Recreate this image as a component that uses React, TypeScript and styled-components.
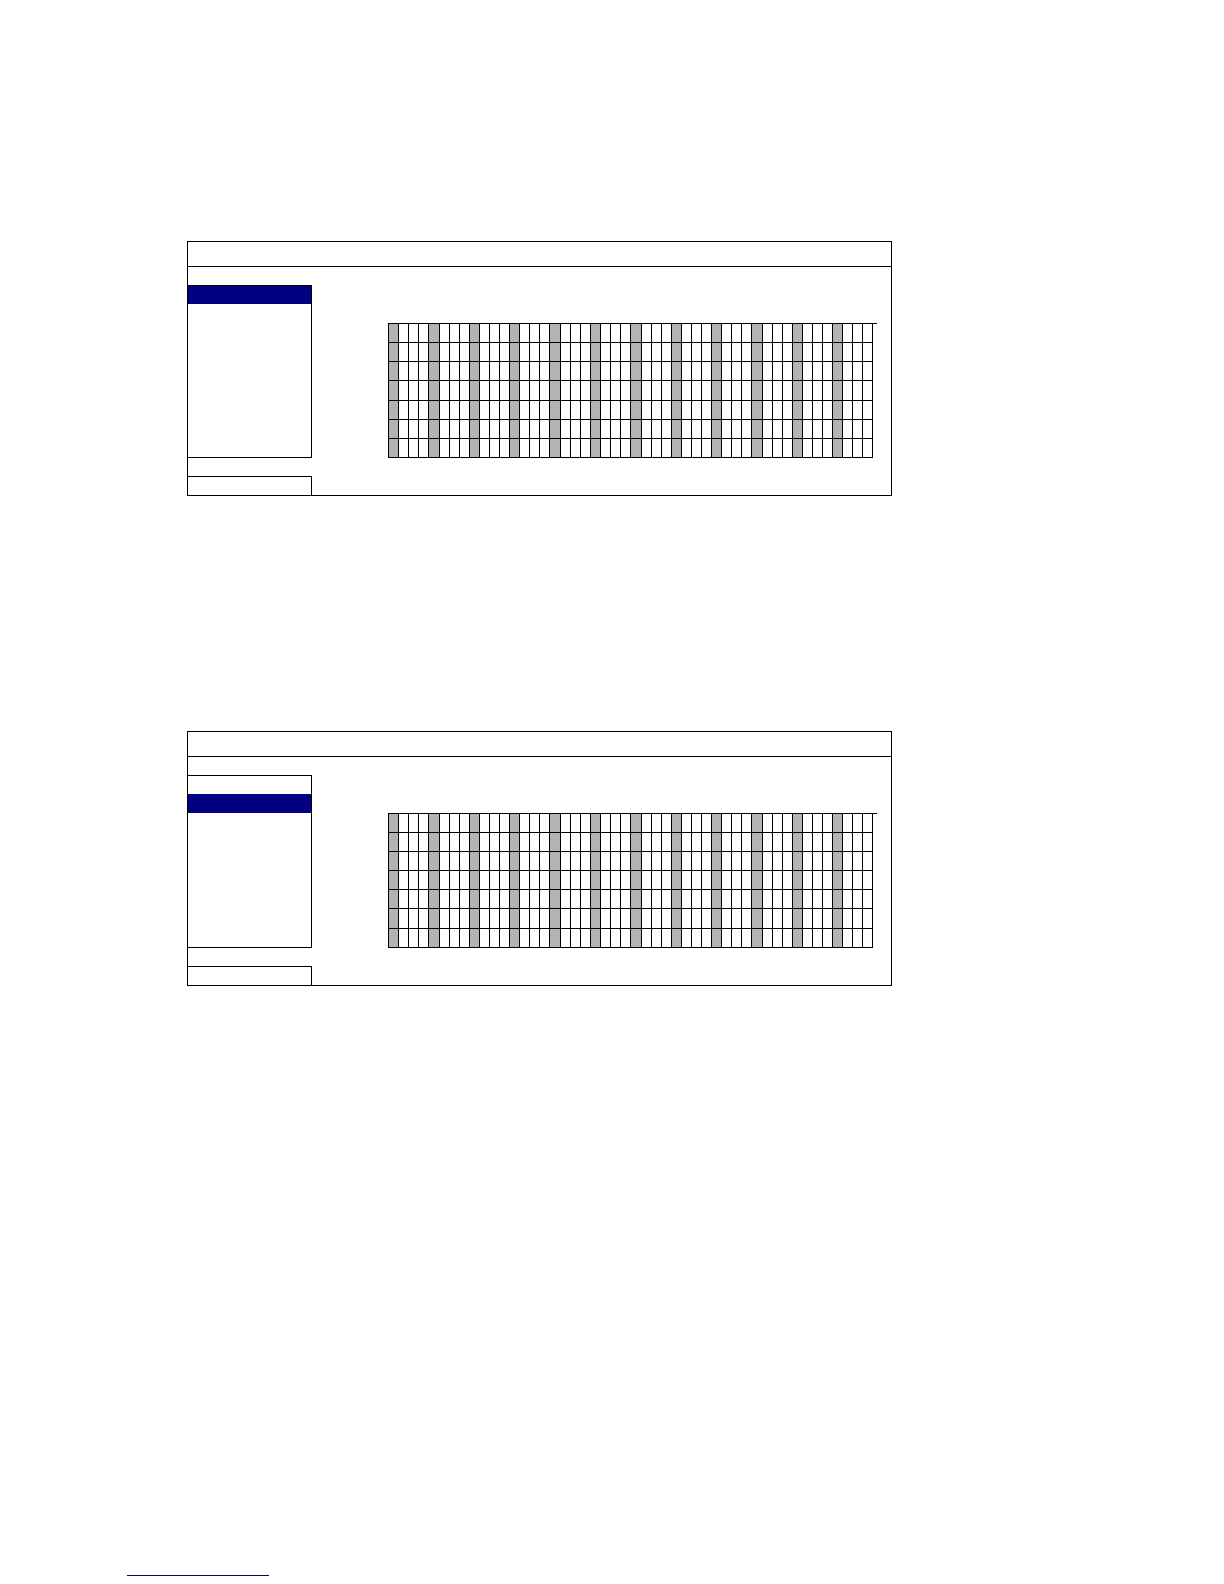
import React, { useState } from "react";
import styled, { createGlobalStyle } from "styled-components";

const GlobalStyle = createGlobalStyle`
  *, *::before, *::after { box-sizing: border-box; }
  body { margin: 0; background: #fff; font-family: "Liberation Sans", Arial, sans-serif; }
`;

const line = "1px solid #000";

const Page = styled.div`
  display: flex;
  flex-direction: column;
  min-height: 100vh;
  padding: 241px 127px 8px;
`;

const Panels = styled.main`
  display: flex;
  flex-direction: column;
  gap: 235px;
  padding: 0 60px 235px;
`;

const Panel = styled.section`
  width: 100%;
  max-width: 705px;
  border: ${line};
`;

const TitleBar = styled.header`
  height: 25px;
  border-bottom: ${line};
`;

const PanelBody = styled.div`
  display: flex;
  gap: 76px;
  padding-top: 18px;
`;

const Sidebar = styled.div`
  flex: none;
  display: flex;
  flex-direction: column;
  gap: 18px;
  width: 124px;
`;

const Menu = styled.nav`
  display: grid;
  grid-template-rows: 18px repeat(7, 19px) 20px;
  border: ${line};
  border-left: 0;
`;

const MenuItem = styled.button<{ $active: boolean }>`
  display: block;
  margin: 0;
  padding: 0;
  border: 0;
  background: ${({ $active }) => ($active ? "#000080" : "transparent")};
`;

const StatusButton = styled.button`
  height: 19px;
  margin: 0;
  padding: 0;
  border: ${line};
  border-left: 0;
  border-bottom: 0;
  background: transparent;
`;

const Schedule = styled.div`
  flex: 1;
  min-width: 0;
  align-self: flex-start;
  margin: 38px 14px 0 0;
  border-top: ${line};
`;

const Grid = styled.table`
  table-layout: fixed;
  width: 485px;
  border-collapse: separate;
  border-spacing: 0;
  border-left: ${line};
`;

const Column = styled.col<{ $width: number }>`
  width: ${({ $width }) => $width}px;
`;

const Row = styled.tr<{ $height: number }>`
  height: ${({ $height }) => $height}px;
`;

const Cell = styled.td`
  padding: 0;
  border-right: ${line};
  border-bottom: ${line};

  &:nth-child(4n + 1) { background: #b3b3b3; }
`;

const WIDE_COLUMNS = [4, 16, 24, 36];
const columns = Array.from({ length: 48 }, (_, i) => (WIDE_COLUMNS.includes(i) ? 11 : 10));
const menuItems = Array.from({ length: 9 }, (_, i) => i);
const days = [0, 1, 2, 3, 4, 5, 6];

function SchedulePanel({ initial, tallRow }: { initial: number; tallRow: number }) {
  const [active, setActive] = useState(initial);
  return (
    <Panel>
      <TitleBar />
      <PanelBody>
        <Sidebar>
          <Menu>
            {menuItems.map((i) => (
              <MenuItem
                key={i}
                type="button"
                aria-label={`Entry ${i + 1}`}
                $active={i === active}
                onClick={() => setActive(i)}
              />
            ))}
          </Menu>
          <StatusButton type="button" aria-label="Status" />
        </Sidebar>
        <Schedule>
          <Grid aria-label="Schedule">
            <colgroup>
              {columns.map((w, i) => <Column key={i} $width={w} />)}
            </colgroup>
            <tbody>
              {days.map((d) => (
                <Row key={d} $height={d === tallRow ? 20 : 19}>
                  {columns.map((_, i) => <Cell key={i} />)}
                </Row>
              ))}
            </tbody>
          </Grid>
        </Schedule>
      </PanelBody>
    </Panel>
  );
}

const FootRule = styled.hr`
  width: 142px;
  height: 1px;
  margin: auto 0 0;
  border: 0;
  background: #000080;
`;

export default function App() {
  return (
    <>
      <GlobalStyle />
      <Page>
        <Panels>
          <SchedulePanel initial={0} tallRow={3} />
          <SchedulePanel initial={1} tallRow={5} />
        </Panels>
        <FootRule />
      </Page>
    </>
  );
}
